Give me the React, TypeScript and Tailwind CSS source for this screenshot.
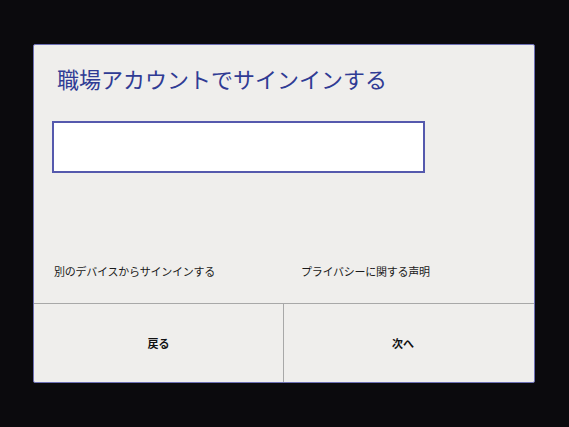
import React from "react";

export default function App() {
  return (
    <div
      className="w-[569px] h-[427px] bg-[#0b0a0d] pt-[44px] pl-[33px]"
      style={{ fontFamily: '"Noto Sans CJK JP", "Noto Sans", sans-serif' }}
    >
      <div className="w-[502px] h-[339px] bg-[#efeeec] border border-[#6c6fb4] rounded-[2px] flex flex-col">
        <h1 className="pl-[23px] pt-[19px] text-[22px] leading-[28px] text-[#2f3b94] font-normal">
          職場アカウントでサインインする
        </h1>
        <div className="ml-[18px] mt-[29px] w-[373px] h-[52px] bg-white border-2 border-[#5559ad]" />
        <div className="flex-1" />
        <div className="flex pl-[20px] mb-[24px] text-[11px] leading-[16px] tracking-[-0.25px] text-[#1a1a1a]">
          <span className="w-[247px]">別のデバイスからサインインする</span>
          <span>プライバシーに関する声明</span>
        </div>
        <div className="h-[79px] border-t border-[#a8a8a8] flex">
          <button className="w-[250px] flex items-center justify-center border-r border-[#a8a8a8] text-[11px] font-bold text-[#111]">
            戻る
          </button>
          <button className="flex-1 flex items-center justify-center pr-[12px] text-[11px] font-bold text-[#111]">
            次へ
          </button>
        </div>
      </div>
    </div>
  );
}
